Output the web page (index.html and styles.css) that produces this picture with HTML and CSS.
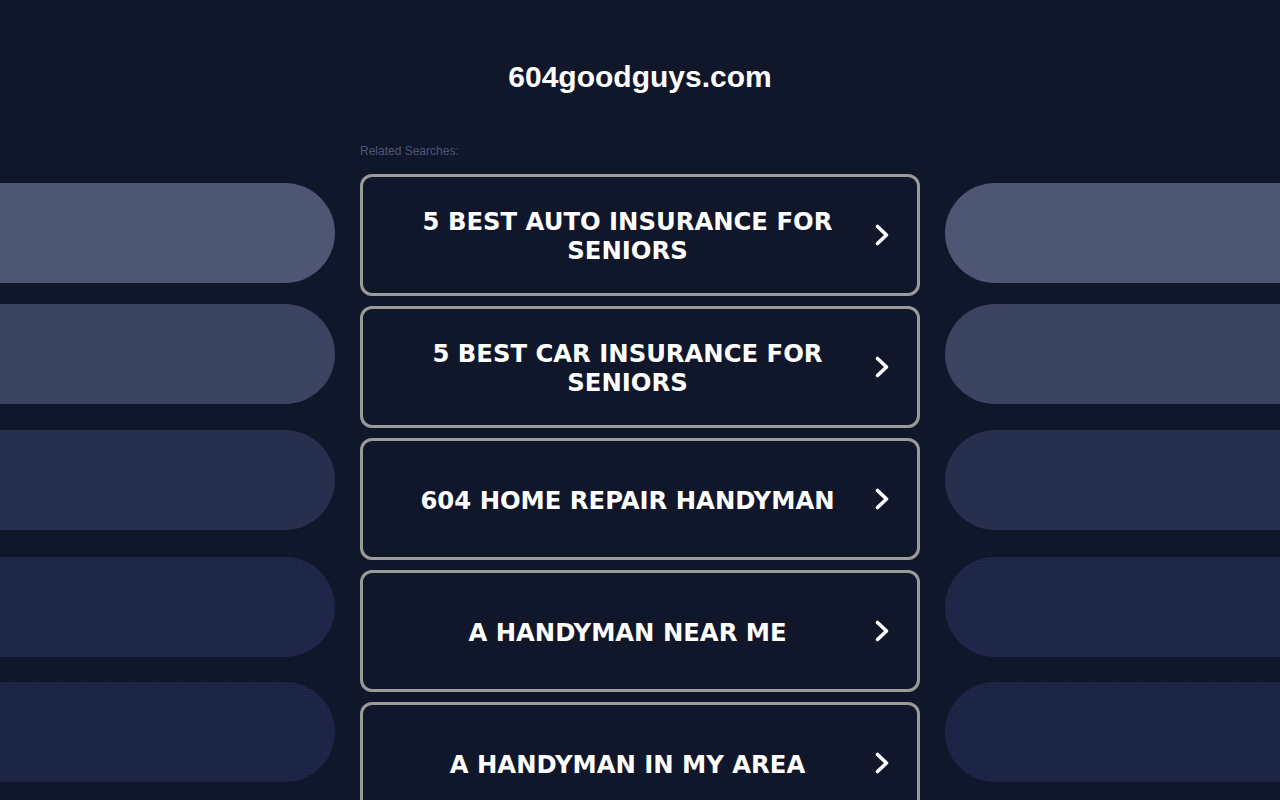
FILE: index.html
```html
<!DOCTYPE html>
<html lang="en">
<head>
<meta charset="utf-8">
<title>604goodguys.com</title>
<link rel="stylesheet" href="styles.css">
</head>
<body>
<header class="header">
  <h1 class="domain">604goodguys.com</h1>
</header>
<main class="layout">
  <div class="side side-left">
    <div class="pill pill-1"></div>
    <div class="pill pill-2"></div>
    <div class="pill pill-3"></div>
    <div class="pill pill-4"></div>
    <div class="pill pill-5"></div>
  </div>
  <section class="center">
    <p class="label">Related Searches:</p>
    <ul class="links">
      <li><a class="link" href="#"><span class="link-text">5 BEST AUTO INSURANCE FOR SENIORS</span><svg class="chev" viewBox="0 0 16 24"><path d="M3.5 3.5 L12.5 12 L3.5 20.5"/></svg></a></li>
      <li><a class="link" href="#"><span class="link-text">5 BEST CAR INSURANCE FOR SENIORS</span><svg class="chev" viewBox="0 0 16 24"><path d="M3.5 3.5 L12.5 12 L3.5 20.5"/></svg></a></li>
      <li><a class="link" href="#"><span class="link-text">604 HOME REPAIR HANDYMAN</span><svg class="chev" viewBox="0 0 16 24"><path d="M3.5 3.5 L12.5 12 L3.5 20.5"/></svg></a></li>
      <li><a class="link" href="#"><span class="link-text">A HANDYMAN NEAR ME</span><svg class="chev" viewBox="0 0 16 24"><path d="M3.5 3.5 L12.5 12 L3.5 20.5"/></svg></a></li>
      <li><a class="link" href="#"><span class="link-text">A HANDYMAN IN MY AREA</span><svg class="chev" viewBox="0 0 16 24"><path d="M3.5 3.5 L12.5 12 L3.5 20.5"/></svg></a></li>
    </ul>
  </section>
  <div class="side side-right">
    <div class="pill pill-1"></div>
    <div class="pill pill-2"></div>
    <div class="pill pill-3"></div>
    <div class="pill pill-4"></div>
    <div class="pill pill-5"></div>
  </div>
</main>
</body>
</html>
```

FILE: styles.css
```css
html, body {
  margin: 0;
  padding: 0;
  height: 100%;
  overflow: hidden;
}
body {
  background: #11172b;
  font-family: "Liberation Sans", Arial, sans-serif;
  color: #fff;
}
.header {
  padding-top: 60px;
  text-align: center;
}
.domain {
  margin: 0;
  font-size: 30px;
  line-height: 34px;
  font-weight: bold;
  color: #fff;
}
.layout {
  display: grid;
  grid-template-columns: 335px 560px 335px;
  column-gap: 25px;
}
.side {
  display: flex;
  flex-direction: column;
  gap: 24px;
  padding-top: 89px;
}
.pill {
  height: 100px;
}
.side-left .pill {
  border-radius: 0 50px 50px 0;
}
.side-right .pill {
  border-radius: 50px 0 0 50px;
}
.pill-1 { background: #4d5672; }
.pill-2 { background: #3a4360; margin-top: -3px; }
.pill-3 { background: #262f4d; margin-top: 2px; }
.pill-4 {
  background-color: #1d2646;
  background-image: radial-gradient(circle, rgba(40, 52, 90, 0.6) 0.6px, transparent 0.9px);
  background-size: 3px 3px;
  margin-top: 3px;
}
.pill-5 {
  background-color: #1b2444;
  background-image: radial-gradient(circle, rgba(36, 48, 86, 0.7) 0.6px, transparent 0.9px);
  background-size: 3px 3px;
  margin-top: 1px;
}
.center {
  padding-top: 50px;
}
.label {
  margin: 0 0 16px 0;
  font-size: 12px;
  line-height: 14px;
  color: #4b5677;
}
.links {
  list-style: none;
  margin: 0;
  padding: 0;
  display: flex;
  flex-direction: column;
  gap: 10px;
}
.link {
  box-sizing: border-box;
  height: 122px;
  display: flex;
  align-items: center;
  border: 3px solid #9a9a9a;
  border-radius: 12px;
  background: #11172b;
  padding: 0 27px 0 20px;
  text-decoration: none;
  color: #fff;
}
.link-text {
  flex: 1;
  text-align: center;
  font-family: "DejaVu Sans", sans-serif;
  font-weight: bold;
  font-size: 24.3px;
  line-height: 29px;
  padding: 0 20px;
  position: relative;
  top: 1px;
}
.chev {
  width: 16px;
  height: 24px;
  margin-left: 2px;
  fill: none;
  stroke: #fff;
  stroke-width: 3.6;
  stroke-linecap: round;
  stroke-linejoin: round;
}
```
